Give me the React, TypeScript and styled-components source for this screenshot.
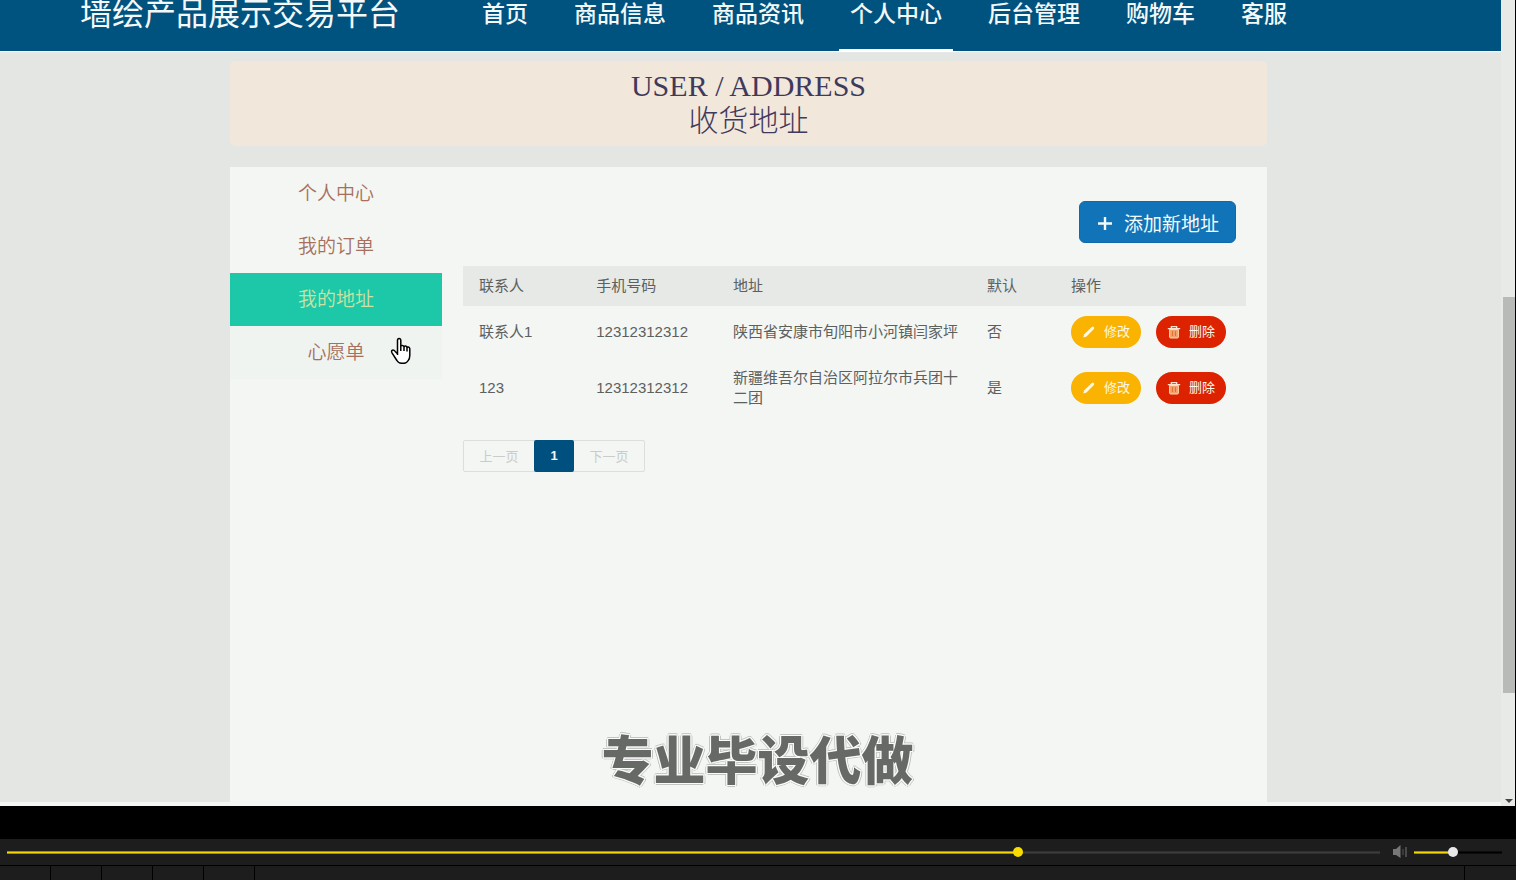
import React, { useState } from "react";
import styled, { createGlobalStyle } from "styled-components";

const sans = `"Liberation Sans", "Noto Sans CJK SC", sans-serif`;
const serif = `"Liberation Serif", "Noto Sans CJK SC", serif`;

const GlobalStyle = createGlobalStyle`
  * { box-sizing: border-box; }
  body { margin: 0; background: #000; font-family: ${sans}; }
  button, input { font-family: inherit; margin: 0; }
`;

const Player = styled.div`
  display: grid;
  grid-template-rows: 1fr auto;
  min-height: 100vh;
`;

const Screen = styled.div`
  position: relative;
  display: flex;
  border-right: 1px solid #000;
  background: #e8eae7;
`;

const Site = styled.div`
  flex: 1;
  display: flex;
  flex-direction: column;
  background: #e3e6e3;
  border-bottom: 4px solid #f3f6f3;
`;

const Header = styled.header`
  display: flex;
  gap: 71px;
  height: 51px;
  padding-left: 80px;
  background: #00527f;
  box-shadow: 0 1px 1px #f6fafa;
  color: #f4f8f8;
  line-height: 28px;
  white-space: nowrap;
`;

const Brand = styled.div`
  font-size: 32px;
`;

const Nav = styled.nav`
  display: flex;
  gap: 24px;
`;

const NavLink = styled.a<{ $active?: boolean }>`
  height: 52px;
  padding: 0 11px;
  border-bottom: 3px solid ${(p) => (p.$active ? "#fff" : "transparent")};
  color: inherit;
  font-size: 23px;
  font-weight: 500;
  text-decoration: none;
`;

const Main = styled.main`
  flex: 1;
  display: flex;
  flex-direction: column;
  gap: 21px;
  padding: 10px 234px 0 230px;
`;

const Banner = styled.h1`
  margin: 0;
  padding: 7px 0 8px;
  border-radius: 5px;
  background: #f1e7db;
  color: #3f3a5c;
  font-family: ${serif};
  font-size: 30px;
  font-weight: 300;
  line-height: 35px;
  text-align: center;
`;

const BannerLine = styled.span`
  display: block;
`;

const Panel = styled.div`
  flex: 1;
  display: flex;
  background: #f3f6f3;
`;

const Sidebar = styled.nav`
  width: 212px;
  flex: none;
`;

const SideLink = styled.a<{ $state?: "active" | "hover" }>`
  position: relative;
  display: block;
  background: ${(p) => (p.$state === "active" ? "#1dc8a8" : p.$state === "hover" ? "#eff4f1" : "none")};
  color: ${(p) => (p.$state === "active" ? "#c9e3a4" : "#a6705c")};
  font-size: 19px;
  font-weight: 350;
  line-height: 53px;
  text-align: center;
  text-decoration: none;
`;

const Pointer = styled.svg`
  position: absolute;
  top: 11px;
  left: 160px;
  width: 22px;
  height: 28px;
`;

const Content = styled.section`
  flex: 1;
  display: flex;
  flex-direction: column;
  align-items: flex-start;
  padding: 34px 21px 0;
`;

const AddButton = styled.button`
  display: flex;
  align-items: center;
  align-self: flex-end;
  gap: 11px;
  height: 42px;
  margin: 0 10px 23px 0;
  padding: 0 16px 0 17px;
  border: 1px solid #1069a8;
  border-radius: 6px;
  background: #1174b8;
  color: #f2fafa;
  font-size: 19px;
`;

const Table = styled.table`
  width: 100%;
  border-collapse: collapse;
  table-layout: fixed;
  color: #5c605f;
  font-size: 15px;
  line-height: 20px;
`;

const HeadCell = styled.th<{ $width?: string }>`
  width: ${(p) => p.$width ?? "auto"};
  padding: 10px 12px 10px 16px;
  background: #e6e9e6;
  font-weight: 400;
  text-align: left;
`;

const Cell = styled.td`
  padding: 10px 12px 10px 16px;
`;

const Actions = styled.div`
  display: flex;
  gap: 15px;
`;

const PillButton = styled.button<{ $tone: "edit" | "remove" }>`
  display: flex;
  align-items: center;
  justify-content: center;
  gap: 8px;
  width: 70px;
  height: 32px;
  flex: none;
  padding: 0;
  border: 0;
  border-radius: 16px;
  background: ${(p) => (p.$tone === "edit" ? "#f9b300" : "#dd2200")};
  color: #fff8e8;
  font-size: 13px;
  white-space: nowrap;
`;

const PillLabel = styled.span`
  padding-bottom: 3px;
`;

const Pagination = styled.div`
  display: flex;
  height: 32px;
  margin-top: 22px;
  border: 1px solid #dbdedb;
  border-radius: 2px;
`;

const PageButton = styled.button<{ $current?: boolean }>`
  width: ${(p) => (p.$current ? 40 : 70)}px;
  height: 32px;
  margin-top: -1px;
  padding: 0 0 2px;
  border: 0;
  border-radius: 2px;
  background: ${(p) => (p.$current ? "#00507f" : "none")};
  color: ${(p) => (p.$current ? "#f3f8f8" : "#c9ccca")};
  font-size: 13px;
  font-weight: ${(p) => (p.$current ? 700 : 400)};
`;

const ScrollTrack = styled.div`
  display: flex;
  flex-direction: column;
  width: 14px;
  flex: none;
  padding-left: 2px;
`;

const ScrollGap = styled.div<{ $grow: number }>`
  display: flex;
  flex: ${(p) => p.$grow} 0 0;
  align-items: flex-end;
  justify-content: center;
`;

const ScrollThumb = styled.div`
  flex: 396 0 0;
  background: #b7bab7;
`;

const Caption = styled.p`
  position: absolute;
  right: 0;
  bottom: 12px;
  left: 0;
  margin: 0;
  color: #666966;
  font-size: 52px;
  font-weight: 900;
  line-height: 64px;
  text-align: center;
  pointer-events: none;
  text-shadow:
    1px 0 #fafbfa, -1px 0 #fafbfa, 0 1px #fafbfa, 0 -1px #fafbfa,
    1px 1px #fafbfa, -1px 1px #fafbfa, 1px -1px #fafbfa, -1px -1px #fafbfa,
    2px 0 #c2c5c2, -2px 0 #c2c5c2, 0 2px #c2c5c2, 0 -2px #c2c5c2,
    2px 1px #c2c5c2, -2px 1px #c2c5c2, 1px -2px #c2c5c2, -1px -2px #c2c5c2;
`;

const Controls = styled.footer`
  padding-top: 33px;
  background: #000;
`;

const Timeline = styled.div`
  display: flex;
  align-items: center;
  height: 26px;
  padding: 0 14px 0 7px;
  background: #1d1d1d;
`;

const Slider = styled.input<{ $thumb: string; $rail: string }>`
  appearance: none;
  width: 88px;
  height: 12px;
  background: transparent;
  &::-webkit-slider-runnable-track {
    height: 3px;
    border-top: 1px solid rgba(29, 29, 29, 0.4);
    border-bottom: 1px solid rgba(29, 29, 29, 0.4);
    background: linear-gradient(#f5d800, #f5d800) left / var(--played) 3px no-repeat border-box, ${(p) => p.$rail};
  }
  &::-webkit-slider-thumb {
    appearance: none;
    width: 10px;
    height: 10px;
    margin-top: -5px;
    border-radius: 50%;
    background: ${(p) => p.$thumb};
  }
`;

const SeekSlider = styled(Slider)`
  flex: 1;
`;

const MuteButton = styled.button`
  display: flex;
  margin: 0 6px 0 12px;
  padding: 0;
  border: 0;
  background: none;
`;

const Toolbar = styled.div`
  display: flex;
  height: 15px;
  border-top: 1px solid #000;
  background: #1d1d1d;
`;

const ToolSlot = styled.div`
  width: 51px;
  border-right: 1px solid #000;
`;

const ToolEnd = styled.div`
  width: 52px;
  margin-left: auto;
  border-left: 1px solid #000;
`;

const PlusIcon = () => (
  <svg width="16" height="16" viewBox="0 0 16 16" aria-hidden="true">
    <path d="M8 3v13M1 9.5h14" stroke="currentColor" strokeWidth="2.4" fill="none" />
  </svg>
);

const PencilIcon = () => (
  <svg width="14" height="14" viewBox="0 0 14 14" aria-hidden="true">
    <path d="M1.2 12.6l1.1-3.3 7.5-7.4q1.1-.8 2 .1t.1 2l-7.4 7.5z" fill="currentColor" />
  </svg>
);

const TrashIcon = () => (
  <svg width="14" height="14" viewBox="0 0 14 14" aria-hidden="true">
    <path d="M2.6 4.5h8.8V12q0 1-1 1H3.6q-1 0-1-1z" fill="#f2a06c" stroke="#ffd5b0" />
    <path d="M.8 3.6h12.4M4.4 3V1.6h5.2V3" fill="none" stroke="#ffe3cf" strokeWidth="1.4" />
    <path d="M5.5 6.2v4.8M8.5 6.2v4.8" stroke="#e0702f" />
  </svg>
);

const SpeakerIcon = () => (
  <svg width="16" height="14" viewBox="0 0 16 14" aria-hidden="true">
    <path d="M1 4h3l4.5-4v13L4 10H1z" fill="#777" />
    <path d="M11 4v6" stroke="#555" />
    <path d="M14 2v10" stroke="#777" />
  </svg>
);

const HandPointer = () => (
  <Pointer viewBox="0 0 22 28" aria-hidden="true">
    <path
      d="M7.5 18V3.5q0-2 1.6-2t1.7 2V10q0-1.6 1.6-1.5t1.6 1.8q.2-1.4 1.6-1.2t1.4 1.8q.2-1 1.4-.8t1.4 1.8v6.4q0 3.6-1.6 5.2-1.5 2.7-4.2 2.7h-2.6q-3 0-4.5-2.7L2 15.8q-1-2.2.4-2.6 1.5-.4 2.8 1.2l2.3 2.4M10.8 10v4M14 10.5V14M17 11v3.5"
      fill="#fff"
      stroke="#000"
      strokeWidth="1.5"
      strokeLinejoin="round"
    />
  </Pointer>
);

const navItems = ["首页", "商品信息", "商品资讯", "个人中心", "后台管理", "购物车", "客服"];

const columns = [
  { label: "联系人", width: "15%" },
  { label: "手机号码", width: "17.5%" },
  { label: "地址", width: "254px" },
  { label: "默认", width: "84px" },
  { label: "操作", width: "191px" },
];

const addresses = [
  { name: "联系人1", phone: "12312312312", address: "陕西省安康市旬阳市小河镇闫家坪", isDefault: "否" },
  { name: "123", phone: "12312312312", address: "新疆维吾尔自治区阿拉尔市兵团十二团", isDefault: "是" },
];

export default function App() {
  const [position, setPosition] = useState(73.8);
  const [volume, setVolume] = useState(43.6);

  return (
    <Player>
      <GlobalStyle />
      <Screen>
        <Site>
          <Header>
            <Brand>墙绘产品展示交易平台</Brand>
            <Nav>
              {navItems.map((item) => (
                <NavLink key={item} href="#" $active={item === "个人中心"}>
                  {item}
                </NavLink>
              ))}
            </Nav>
          </Header>
          <Main>
            <Banner>
              <BannerLine>USER / ADDRESS</BannerLine>
              <BannerLine>收货地址</BannerLine>
            </Banner>
            <Panel>
              <Sidebar>
                <SideLink href="#">个人中心</SideLink>
                <SideLink href="#">我的订单</SideLink>
                <SideLink href="#" $state="active">我的地址</SideLink>
                <SideLink href="#" $state="hover">
                  心愿单
                  <HandPointer />
                </SideLink>
              </Sidebar>
              <Content>
                <AddButton type="button">
                  <PlusIcon />
                  添加新地址
                </AddButton>
                <Table>
                  <thead>
                    <tr>
                      {columns.map((c) => (
                        <HeadCell key={c.label} scope="col" $width={c.width}>{c.label}</HeadCell>
                      ))}
                    </tr>
                  </thead>
                  <tbody>
                    {addresses.map((row) => (
                      <tr key={row.name}>
                        <Cell>{row.name}</Cell>
                        <Cell>{row.phone}</Cell>
                        <Cell>{row.address}</Cell>
                        <Cell>{row.isDefault}</Cell>
                        <Cell>
                          <Actions>
                            <PillButton type="button" $tone="edit">
                              <PencilIcon />
                              <PillLabel>修改</PillLabel>
                            </PillButton>
                            <PillButton type="button" $tone="remove">
                              <TrashIcon />
                              <PillLabel>删除</PillLabel>
                            </PillButton>
                          </Actions>
                        </Cell>
                      </tr>
                    ))}
                  </tbody>
                </Table>
                <Pagination>
                  <PageButton type="button" disabled>上一页</PageButton>
                  <PageButton type="button" $current>1</PageButton>
                  <PageButton type="button" disabled>下一页</PageButton>
                </Pagination>
              </Content>
            </Panel>
          </Main>
        </Site>
        <ScrollTrack>
          <ScrollGap $grow={297} />
          <ScrollThumb />
          <ScrollGap $grow={113}>
            <svg width="8" height="7" viewBox="0 0 8 7" aria-hidden="true">
              <path d="M0 0h8L4 4z" fill="#444" />
            </svg>
          </ScrollGap>
        </ScrollTrack>
        <Caption>专业毕设代做</Caption>
      </Screen>
      <Controls>
        <Timeline>
          <SeekSlider
            type="range"
            aria-label="播放进度"
            step="0.1"
            value={position}
            onChange={(e) => setPosition(Number(e.target.value))}
            $thumb="#f8dc00"
            $rail="#3c3c3c"
            style={{ "--played": `${position}%` } as React.CSSProperties}
          />
          <MuteButton type="button" aria-label="静音">
            <SpeakerIcon />
          </MuteButton>
          <Slider
            type="range"
            aria-label="音量"
            step="0.1"
            value={volume}
            onChange={(e) => setVolume(Number(e.target.value))}
            $thumb="#e8e8e8"
            $rail="#000"
            style={{ "--played": `${volume}%` } as React.CSSProperties}
          />
        </Timeline>
        <Toolbar>
          {[0, 1, 2, 3, 4].map((slot) => (
            <ToolSlot key={slot} />
          ))}
          <ToolEnd />
        </Toolbar>
      </Controls>
    </Player>
  );
}
